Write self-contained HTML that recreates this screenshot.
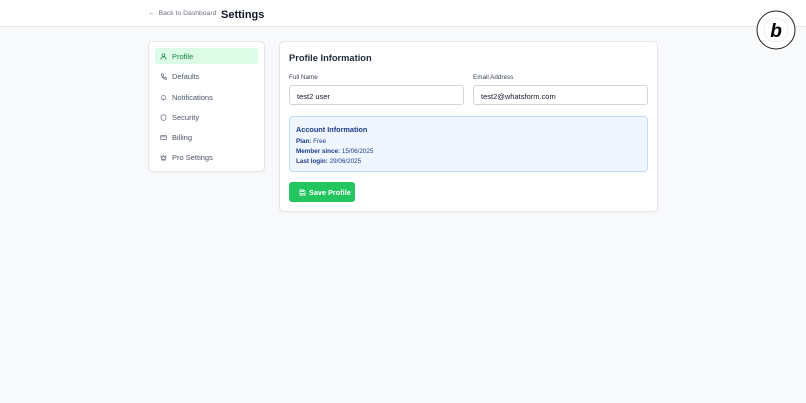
<!DOCTYPE html><html><head><style>
*{box-sizing:border-box;margin:0;padding:0}
body{width:806px;height:403px;background:#f8f9fb;font-family:"Liberation Sans",sans-serif;position:relative;overflow:hidden;color:#111827}
.hdr{position:absolute;left:0;top:0;width:806px;height:27px;background:#fff;border-bottom:1px solid #e5e7eb}
.a{position:absolute}
.card{position:absolute;background:#fff;border:1px solid #e5e7eb;border-radius:5px;box-shadow:0 1px 2px rgba(0,0,0,.04)}
.nav{position:absolute;left:155px;width:103px;height:16px;font-size:7.5px;color:#4b5563;line-height:18px;padding-left:17px}
.nav svg{position:absolute;left:5px;top:5px}
.act{background:#dcfce7;color:#15803d;border-radius:3px}
.lbl{position:absolute;font-size:6.3px;color:#374151}
.inp{position:absolute;height:20px;border:1px solid #d1d5db;border-radius:3px;font-size:7.5px;line-height:21px;padding-left:7px;color:#111827;background:#fff}
.ai{font-size:6.3px;color:#1e3a8a;position:absolute;left:296px}
.ai b{color:#1e3a8a}
</style></head><body>
<div class="hdr"></div>
<div class="a" style="left:148px;top:10px;font-size:6.8px;color:#6b7280">← &nbsp;Back to Dashboard</div>
<div class="a" style="left:221px;top:9px;font-size:11px;font-weight:bold;color:#111827">Settings</div>
<svg class="a" style="left:756px;top:10px" width="40" height="40" viewBox="0 0 40 40"><circle cx="20" cy="20" r="19" fill="#fff" stroke="#222" stroke-width="1"/><circle cx="20" cy="20" r="12" fill="none" stroke="#ddd" stroke-width=".5"/><text x="20" y="27" text-anchor="middle" font-size="19" font-weight="bold" font-style="italic" font-family="Liberation Sans">b</text></svg>
<div class="card" style="left:148px;top:41px;width:117px;height:131px"></div>
<div class="nav act" style="top:48px"><svg width="7" height="7" viewBox="0 0 8 8" fill="none" stroke="#15803d" stroke-width=".8"><circle cx="4" cy="2.5" r="1.6"/><path d="M1 7.5c0-2 1.3-3 3-3s3 1 3 3"/></svg>Profile</div>
<div class="nav" style="top:68px"><svg width="7" height="7" viewBox="0 0 8 8" fill="none" stroke="#6b7280" stroke-width=".8"><path d="M1.5 1h2l.7 1.8-1 .8a4 4 0 002 2l.8-1 1.8.7v2A6 6 0 011.5 1z"/></svg>Defaults</div>
<div class="nav" style="top:89px"><svg width="7" height="7" viewBox="0 0 8 8" fill="none" stroke="#6b7280" stroke-width=".8"><path d="M2 6V3.5a2 2 0 014 0V6H1.5h5M3.3 7h1.4"/></svg>Notifications</div>
<div class="nav" style="top:109px"><svg width="7" height="7" viewBox="0 0 8 8" fill="none" stroke="#6b7280" stroke-width=".8"><path d="M4 .8l2.8 1v2.3C6.8 5.8 5.5 7 4 7.4 2.5 7 1.2 5.8 1.2 4.1V1.8z"/></svg>Security</div>
<div class="nav" style="top:129px"><svg width="7" height="7" viewBox="0 0 8 8" fill="none" stroke="#6b7280" stroke-width=".8"><rect x=".7" y="1.7" width="6.6" height="4.6" rx=".6"/><path d="M.7 3.3h6.6"/></svg>Billing</div>
<div class="nav" style="top:149px"><svg width="7" height="7" viewBox="0 0 8 8" fill="none" stroke="#6b7280" stroke-width=".8"><path d="M1 2l1.6 2L4 1.5 5.4 4 7 2l-.7 4H1.7zM1.7 7h4.6"/></svg>Pro Settings</div>
<div class="card" style="left:279px;top:41px;width:379px;height:171px"></div>
<div class="a" style="left:289px;top:53px;font-size:9.3px;font-weight:bold;color:#1f2937">Profile Information</div>
<div class="lbl" style="left:289px;top:74px">Full Name</div>
<div class="lbl" style="left:473px;top:74px">Email Address</div>
<div class="inp" style="left:289px;top:85px;width:175px">test2 user</div>
<div class="inp" style="left:473px;top:85px;width:175px">test2@whatsform.com</div>
<div class="a" style="left:289px;top:116px;width:359px;height:56px;background:#eff6ff;border:1px solid #bfdbfe;border-radius:4px"></div>
<div class="a" style="left:296px;top:125px;font-size:7.3px;font-weight:bold;color:#1e3a8a">Account Information</div>
<div class="ai" style="top:138px"><b>Plan:</b> Free</div>
<div class="ai" style="top:148px"><b>Member since:</b> 15/06/2025</div>
<div class="ai" style="top:158px"><b>Last login:</b> 29/06/2025</div>
<div class="a" style="left:289px;top:182px;width:66px;height:20px;background:#22c55e;border-radius:3px;color:#fff;font-size:7.3px;font-weight:bold;line-height:21px;padding-left:20px">Save Profile</div>
<svg class="a" style="left:299px;top:189px" width="7" height="7" viewBox="0 0 8 8" fill="none" stroke="#fff" stroke-width=".8"><path d="M1 1h4.5L7 2.5V7H1zM2.3 1v2h3V1M2.3 7V5h3.4v2"/></svg>
</body></html>
